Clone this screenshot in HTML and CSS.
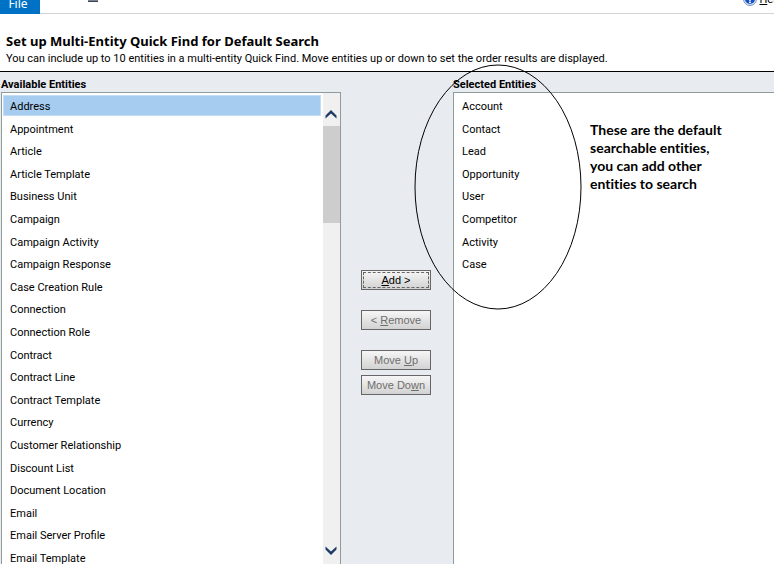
FILE: index.html
```html
<!DOCTYPE html>
<html lang="en">
<head>
    <meta charset="UTF-8">
    <meta name="viewport" content="width=device-width, initial-scale=1">
    <title>Set up Quick Find</title>
    <link rel="stylesheet" href="styles.css">
</head>
<body>
    <div class="ribbon">
        <button class="file-tab" type="button">File</button>
        <span class="ribbon-mark"></span>
        <a class="help-link" href="#help">
            <svg class="help-icon" width="14" height="14" viewBox="0 0 14 14" aria-hidden="true">
                <circle cx="7" cy="7" r="6.5" fill="#dce9f8" stroke="#7d93b5"/>
                <circle cx="7" cy="7" r="5" fill="#1650c8"/>
                <path d="M5 5Q5 3.5 7 3.5T9 5Q9 6 7 7V9.5" fill="none" stroke="#fff" stroke-width="1.5"/>
                <path d="M6 10h2v1H6z" fill="#fff"/>
            </svg>
            <span><u>H</u>elp</span>
        </a>
    </div>

    <div class="page-header">
        <h1>Set up Multi-Entity Quick Find for Default Search</h1>
        <p>You can include up to 10 entities in a multi-entity Quick Find. Move entities up or down to set the order results are displayed.</p>
    </div>

    <form class="picker">
        <div class="panel">
            <label for="available">Available Entities</label>
            <div class="list-box">
                <select id="available" class="entity-list" multiple>
                    <option selected>Address</option>
                    <option>Appointment</option>
                    <option>Article</option>
                    <option>Article Template</option>
                    <option>Business Unit</option>
                    <option>Campaign</option>
                    <option>Campaign Activity</option>
                    <option>Campaign Response</option>
                    <option>Case Creation Rule</option>
                    <option>Connection</option>
                    <option>Connection Role</option>
                    <option>Contract</option>
                    <option>Contract Line</option>
                    <option>Contract Template</option>
                    <option>Currency</option>
                    <option>Customer Relationship</option>
                    <option>Discount List</option>
                    <option>Document Location</option>
                    <option>Email</option>
                    <option>Email Server Profile</option>
                    <option>Email Template</option>
                </select>
                <div class="scrollbar" aria-hidden="true">
                    <svg width="13" height="10" viewBox="0 0 13 10">
                        <path d="M0.5 6.5L6 1L11.5 6.5V9.5L6 4.5L0.5 9.5Z" fill="#1f3b63"/>
                    </svg>
                    <div class="scroll-thumb"></div>
                    <svg width="13" height="10" viewBox="0 0 13 10">
                        <path d="M0.5 3.5L6 9L11.5 3.5V0.5L6 5.5L0.5 0.5Z" fill="#1f3b63"/>
                    </svg>
                </div>
            </div>
        </div>

        <div class="actions">
            <button class="action-btn focused" type="button"><u>A</u>dd &gt;</button>
            <button class="action-btn" type="button" disabled>&lt; <u>R</u>emove</button>
            <div class="move-group">
                <button class="action-btn" type="button" disabled>Move <u>U</u>p</button>
                <button class="action-btn" type="button" disabled>Move Do<u>w</u>n</button>
            </div>
        </div>

        <div class="panel selected-panel">
            <label for="selected">Selected Entities</label>
            <div class="list-box open-right">
                <select id="selected" class="entity-list" multiple>
                    <option>Account</option>
                    <option>Contact</option>
                    <option>Lead</option>
                    <option>Opportunity</option>
                    <option>User</option>
                    <option>Competitor</option>
                    <option>Activity</option>
                    <option>Case</option>
                </select>
            </div>
            <svg class="callout-ring" width="168" height="246" viewBox="0 0 168 246" aria-hidden="true">
                <ellipse cx="84" cy="123" rx="83" ry="122" fill="none" stroke="#000"/>
            </svg>
            <p class="callout-note">These are the default searchable entities, you can add other entities to search</p>
        </div>
    </form>
</body>
</html>
```

FILE: styles.css
```css
* {
    box-sizing: border-box;
    margin: 0;
    padding: 0;
}

body {
    display: flex;
    flex-direction: column;
    height: 100vh;
    overflow: hidden;
    background-color: #fff;
    color: #000;
    font-family: Roboto, "Noto Sans", sans-serif;
    font-size: 11px;
}

/* Ribbon */
.ribbon {
    display: flex;
    align-items: flex-start;
    height: 14px;
    flex-shrink: 0;
    border-bottom: 1px solid #d2d2d2;
}

.file-tab {
    width: 40px;
    height: 14px;
    border: none;
    background-color: #0072c6;
    color: #fff;
    font-family: "Noto Sans", sans-serif;
    font-size: 12px;
    line-height: 8px;
    padding: 0 4px 8px 0;
}

.ribbon-mark {
    width: 10px;
    height: 2px;
    margin-left: 48px;
    background-color: #7b8494;
    border-bottom: 1px solid #3c4454;
}

.help-link {
    display: flex;
    gap: 2px;
    height: 6px;
    margin-left: auto;
    margin-right: -8px;
    align-items: flex-end;
    color: #000;
    line-height: 12px;
    text-decoration: none;
}

/* Page header */
.page-header {
    flex-shrink: 0;
    padding: 18px 6px 4px;
    border-bottom: 1px solid #000;
}

.page-header h1 {
    font-family: "Noto Sans", sans-serif;
    font-size: 13px;
    line-height: 18px;
}

.page-header p {
    font-size: 11px;
    line-height: 17px;
    white-space: nowrap;
}

/* Entity picker */
.picker {
    flex: 1;
    min-height: 0;
    display: grid;
    grid-template-columns: minmax(0, 340fr) 112px minmax(0, 321fr);
    grid-template-rows: minmax(0, 1fr);
    padding-left: 1px;
    background-color: #e8ebf0;
}

.panel {
    display: flex;
    flex-direction: column;
    min-height: 0;
}

.panel label {
    padding-top: 6px;
    font-weight: bold;
    line-height: 14px;
}

.list-box {
    flex: 1;
    min-height: 0;
    display: flex;
    background-color: #fff;
    border: 1px solid #8f9c9b;
    border-bottom: none;
}

.open-right {
    border-right: none;
}

.entity-list {
    flex: 1;
    min-width: 0;
    padding: 2px 2px 0 1px;
    border: none;
    outline: none;
    background-color: #fff;
    font-family: inherit;
    font-size: 11px;
    overflow: hidden;
    scrollbar-width: none;
}

.entity-list option {
    height: 21px;
    margin-bottom: 1px;
    padding: 4px 6px 0;
    color: #000;
    border: 1px solid transparent;
}

.entity-list option:nth-child(5n+1),
.entity-list option:nth-child(5n+3),
.entity-list option:nth-child(5n+5) {
    margin-bottom: 2px;
}

.entity-list option:checked {
    background: linear-gradient(#a6cdf0, #a6cdf0);
    border-color: #c5def7;
}

.scrollbar {
    width: 17px;
    flex-shrink: 0;
    display: flex;
    flex-direction: column;
    align-items: center;
    padding: 16px 0 8px;
    background-color: #f0f0f0;
}

.scroll-thumb {
    width: 100%;
    height: 97px;
    margin: 7px 0 auto;
    background-color: #cdcdcd;
}

/* Buttons between the lists */
.actions {
    display: flex;
    flex-direction: column;
    align-items: center;
    gap: 20px;
    padding: 198px 2px 0 0;
}

.move-group {
    display: flex;
    flex-direction: column;
    gap: 5px;
}

.action-btn {
    width: 70px;
    height: 20px;
    border: 1px solid #666;
    background-image: linear-gradient(#f6f6f6, #d2d2d2);
    color: #000;
    font-family: "Liberation Sans", Arial, sans-serif;
    font-size: 11px;
    white-space: nowrap;
}

.action-btn:disabled {
    color: #6e6e6e;
}

.action-btn.focused {
    outline: 1px dashed #666;
    outline-offset: -3px;
}

/* Callout drawn over the selected list */
.selected-panel {
    position: relative;
}

.callout-ring {
    position: absolute;
    top: -8px;
    left: -39px;
    pointer-events: none;
}

.callout-note {
    position: absolute;
    top: 49px;
    left: 137px;
    width: 140px;
    font-family: Lato, sans-serif;
    font-size: 14px;
    font-weight: bold;
    font-variant-ligatures: none;
    line-height: 18px;
}
```
